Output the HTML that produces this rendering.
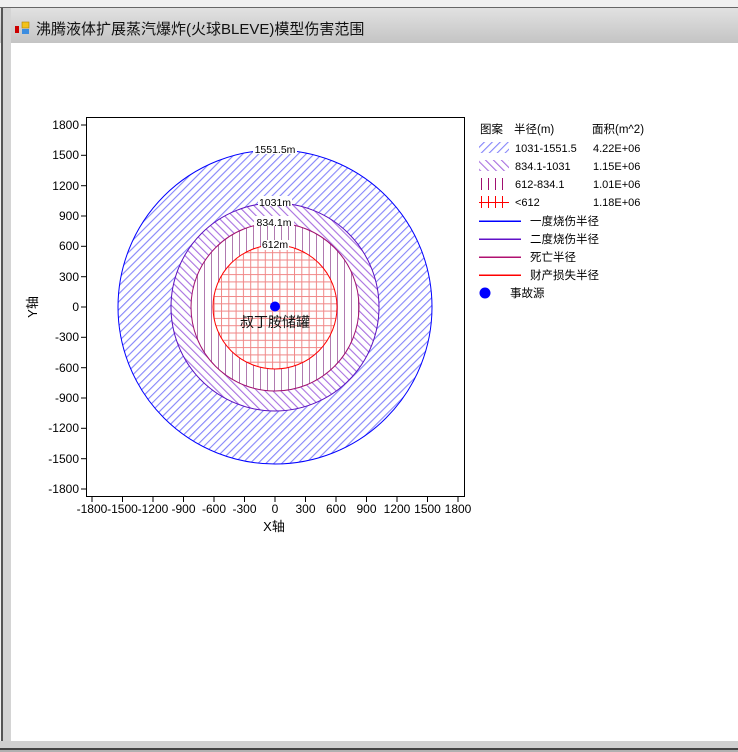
<!DOCTYPE html>
<html><head><meta charset="utf-8"><style>
html,body{margin:0;padding:0;width:738px;height:752px;overflow:hidden;background:#f0f0f0;font-family:"Liberation Sans","Noto Sans CJK SC",sans-serif}
</style></head><body>
<svg width="738" height="752" xmlns="http://www.w3.org/2000/svg" style="position:absolute;left:0;top:0" font-family="Liberation Sans, Noto Sans CJK SC, sans-serif">
<defs>
<linearGradient id="tb" x1="0" y1="0" x2="0" y2="1"><stop offset="0" stop-color="#e2e2e2"/><stop offset="1" stop-color="#c4c4c4"/></linearGradient>
<pattern id="p1" width="5.6" height="5.6" patternUnits="userSpaceOnUse" patternTransform="rotate(45)"><rect width="5.6" height="5.6" fill="#fff"/><rect x="0" y="0" width="1.1" height="5.6" fill="#8585fa"/></pattern>
<pattern id="p2" width="5.6" height="5.6" patternUnits="userSpaceOnUse" patternTransform="rotate(-45)"><rect width="5.6" height="5.6" fill="#fff"/><rect x="0" y="0" width="1.1" height="5.6" fill="#a870e0"/></pattern>
<pattern id="p3" width="7" height="7" patternUnits="userSpaceOnUse" x="1"><rect width="7" height="7" fill="#fff"/><rect x="0" y="0" width="1" height="7" fill="#b07ab0"/></pattern>
<pattern id="p4" width="7.3" height="7.3" patternUnits="userSpaceOnUse" x="2" y="4"><rect width="7.3" height="7.3" fill="#fff"/><rect x="0" y="0" width="1" height="7.3" fill="#f08888"/><rect x="0" y="0" width="7.3" height="1" fill="#f08888"/></pattern>
</defs>
<rect x="0" y="0" width="738" height="8" fill="#f0f0f0"/>
<rect x="0" y="7" width="738" height="36" fill="url(#tb)"/>
<rect x="1" y="7" width="2" height="745" fill="#555"/>
<rect x="3" y="8" width="8" height="744" fill="#d4d4d4"/>
<line x1="0" y1="7.5" x2="738" y2="7.5" stroke="#666"/>
<rect x="11" y="43" width="727" height="698" fill="#fff"/>
<rect x="0" y="741" width="738" height="8" fill="#d0d0d0"/>
<rect x="0" y="748" width="738" height="2" fill="#444"/>
<rect x="0" y="750" width="738" height="2" fill="#b0b0b0"/>
<rect x="15" y="26" width="4" height="7" fill="#c00"/>
<rect x="22" y="22" width="7" height="6" fill="#f3c21a" stroke="#b08000" stroke-width="0.6"/>
<rect x="22" y="29" width="7" height="5" fill="#3c8de0"/>
<text x="36" y="34" font-size="15" fill="#111">沸腾液体扩展蒸汽爆炸(火球BLEVE)模型伤害范围</text>
<rect x="86.5" y="117.5" width="378" height="379" fill="#fff" stroke="#000"/>
<circle cx="275" cy="307" r="157" fill="url(#p1)" stroke="#0000ff" stroke-width="1"/>
<circle cx="275" cy="307" r="104" fill="url(#p2)" stroke="#5a10c0" stroke-width="1"/>
<circle cx="275" cy="307" r="84" fill="url(#p3)" stroke="#a01070" stroke-width="1"/>
<circle cx="275" cy="307" r="62" fill="url(#p4)" stroke="#ff0000" stroke-width="1"/>
<g font-size="10.5" fill="#000" text-anchor="middle">
<rect x="253" y="143" width="44" height="11" fill="#fff"/><text x="275" y="153">1551.5m</text>
<rect x="258" y="196" width="34" height="10" fill="#fff"/><text x="275" y="206">1031m</text>
<rect x="254" y="216" width="40" height="10" fill="#fff"/><text x="274" y="226">834.1m</text>
<rect x="261" y="240" width="28" height="10" fill="#fff"/><text x="275" y="248">612m</text>
</g>
<circle cx="275" cy="306.5" r="5" fill="#0000ff"/>
<text x="275" y="327" font-size="14" text-anchor="middle" fill="#111">叔丁胺储罐</text>
<g stroke="#000">
<line x1="81" y1="125" x2="87" y2="125"/><line x1="81" y1="155.3" x2="87" y2="155.3"/><line x1="81" y1="185.7" x2="87" y2="185.7"/><line x1="81" y1="216" x2="87" y2="216"/><line x1="81" y1="246.3" x2="87" y2="246.3"/><line x1="81" y1="276.7" x2="87" y2="276.7"/><line x1="81" y1="307" x2="87" y2="307"/><line x1="81" y1="337.3" x2="87" y2="337.3"/><line x1="81" y1="367.7" x2="87" y2="367.7"/><line x1="81" y1="398" x2="87" y2="398"/><line x1="81" y1="428.3" x2="87" y2="428.3"/><line x1="81" y1="458.7" x2="87" y2="458.7"/><line x1="81" y1="489" x2="87" y2="489"/>
<line x1="92" y1="496" x2="92" y2="502"/><line x1="122.5" y1="496" x2="122.5" y2="502"/><line x1="153" y1="496" x2="153" y2="502"/><line x1="183.5" y1="496" x2="183.5" y2="502"/><line x1="214" y1="496" x2="214" y2="502"/><line x1="244.5" y1="496" x2="244.5" y2="502"/><line x1="275" y1="496" x2="275" y2="502"/><line x1="305.5" y1="496" x2="305.5" y2="502"/><line x1="336" y1="496" x2="336" y2="502"/><line x1="366.5" y1="496" x2="366.5" y2="502"/><line x1="397" y1="496" x2="397" y2="502"/><line x1="427.5" y1="496" x2="427.5" y2="502"/><line x1="458" y1="496" x2="458" y2="502"/>
</g>
<g font-size="12" fill="#000" text-anchor="end">
<text x="79" y="129">1800</text><text x="79" y="159">1500</text><text x="79" y="190">1200</text><text x="79" y="220">900</text><text x="79" y="250">600</text><text x="79" y="281">300</text><text x="79" y="311">0</text><text x="79" y="341">-300</text><text x="79" y="372">-600</text><text x="79" y="402">-900</text><text x="79" y="432">-1200</text><text x="79" y="463">-1500</text><text x="79" y="493">-1800</text>
</g>
<g font-size="12" fill="#000" text-anchor="middle">
<text x="92" y="513">-1800</text><text x="122.5" y="513">-1500</text><text x="153" y="513">-1200</text><text x="183.5" y="513">-900</text><text x="214" y="513">-600</text><text x="244.5" y="513">-300</text><text x="275" y="513">0</text><text x="305.5" y="513">300</text><text x="336" y="513">600</text><text x="366.5" y="513">900</text><text x="397" y="513">1200</text><text x="427.5" y="513">1500</text><text x="458" y="513">1800</text>
</g>
<text x="274" y="531" font-size="13" text-anchor="middle">X轴</text>
<text x="0" y="0" font-size="13" text-anchor="middle" transform="translate(37,307) rotate(-90)">Y轴</text>
<g font-size="11.5">
<text x="480" y="133">图案</text><text x="514" y="133">半径(m)</text><text x="592" y="133">面积(m^2)</text>
<rect x="479" y="142" width="30" height="11" fill="url(#p1)"/>
<text x="515" y="152" font-size="11">1031-1551.5</text><text x="593" y="152" font-size="11">4.22E+06</text>
<rect x="479" y="160" width="30" height="11" fill="url(#p2)"/>
<text x="515" y="170" font-size="11">834.1-1031</text><text x="593" y="170" font-size="11">1.15E+06</text>
<g fill="#a01070"><rect x="481" y="178" width="1" height="12"/><rect x="488" y="178" width="1" height="12"/><rect x="495" y="178" width="1" height="12"/><rect x="502" y="178" width="1" height="12"/></g>
<text x="515" y="188" font-size="11">612-834.1</text><text x="593" y="188" font-size="11">1.01E+06</text>
<g fill="#ff0000"><rect x="479" y="202" width="30" height="1"/><rect x="481" y="196" width="1" height="12"/><rect x="488" y="196" width="1" height="12"/><rect x="495" y="196" width="1" height="12"/><rect x="502" y="196" width="1" height="12"/></g>
<text x="515" y="206" font-size="11">&lt;612</text><text x="593" y="206" font-size="11">1.18E+06</text>
<rect x="479" y="220.5" width="42" height="1.5" style="fill:#0000ff"/><text x="530" y="225">一度烧伤半径</text>
<rect x="479" y="238.5" width="42" height="1.5" style="fill:#6010c8"/><text x="530" y="243">二度烧伤半径</text>
<rect x="479" y="256.5" width="42" height="1.5" style="fill:#b01070"/><text x="530" y="261">死亡半径</text>
<rect x="479" y="274.5" width="42" height="1.5" style="fill:#ff0000"/><text x="530" y="279">财产损失半径</text>
<circle cx="485" cy="293" r="5.5" style="fill:#0000ff"/><text x="510" y="297">事故源</text>
</g>
</svg>
</body></html>
